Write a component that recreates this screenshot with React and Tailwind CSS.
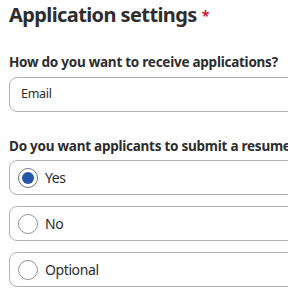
import React from 'react';

const Radio = ({ label, checked }) => (
    <label className="flex items-center h-[35px] border border-[#b4b2b1] rounded-lg pl-[8px] gap-[7px] -mr-[40px]">
        <span className={`w-[20px] h-[20px] rounded-full border flex items-center justify-center ${checked ? "border-[#767676]" : "border-[#949494]"}`}>
            {checked && <span className="w-[12px] h-[12px] rounded-full bg-[#2557a7]" />}
        </span>
        <span className="text-[14px] tracking-[-0.4px] text-[#2d2d2d]">{label}</span>
    </label>
);

const App = () => {
    return (
        <div className="w-[288px] h-[288px] overflow-hidden bg-white pl-[9px]" style={{ fontFamily: '"Noto Sans", sans-serif' }}>
            <h1 className="flex items-start h-[30px] text-[20px] font-bold text-[#2d2d2d] leading-[30px] tracking-[-0.6px]">
                Application settings
                <span className="text-[#c91e3a] text-[14px] leading-none ml-[5px] mt-[9px]">*</span>
            </h1>
            <p className="mt-[22px] text-[13.5px] tracking-[-0.25px] font-bold text-[#2d2d2d] leading-[20px] whitespace-nowrap">How do you want to receive applications?</p>
            <div className="mt-[5px] h-[35px] border border-[#b4b2b1] rounded-lg flex items-center pl-[11px] -mr-[40px]">
                <span className="text-[12.5px] tracking-[-0.3px] text-[#2d2d2d]">Email</span>
            </div>
            <p className="mt-[24px] text-[13.5px] tracking-[-0.25px] font-bold text-[#2d2d2d] leading-[20px] whitespace-nowrap">Do you want applicants to submit a resume?</p>
            <div className="mt-[4px] flex flex-col gap-[11px]">
                <Radio label="Yes" checked />
                <Radio label="No" />
                <Radio label="Optional" />
            </div>
        </div>
    );
};

export default App;
